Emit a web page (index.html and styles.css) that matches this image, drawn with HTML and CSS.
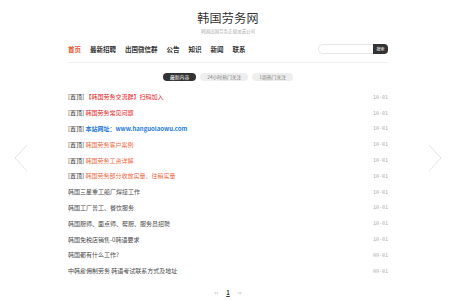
FILE: index.html
```html
<!DOCTYPE html>
<html lang="zh">
<head>
<meta charset="utf-8">
<link rel="stylesheet" href="styles.css">
</head>
<body>
<div class="page">
  <header class="header">
    <h1 class="logo">韩国劳务网</h1>
    <p class="slogan">韩国出国劳务正规派遣公司</p>
  </header>
  <div class="navbar">
    <nav class="nav">
      <a class="active">首页</a>
      <a>最新招聘</a>
      <a>出国微信群</a>
      <a>公告</a>
      <a>知识</a>
      <a>新闻</a>
      <a>联系</a>
    </nav>
    <form class="search">
      <input class="search-input" type="text">
      <button class="search-btn" type="button">搜索</button>
    </form>
  </div>
  <div class="tabs">
    <span class="tab on">最新内容</span>
    <span class="tab">24小时热门关注</span>
    <span class="tab">1周热门关注</span>
  </div>
  <ul class="list">
    <li><span class="t"><span class="top">[置顶]</span> <span class="red">【韩国劳务交流群】扫码加入</span></span><span class="d">10-01</span></li>
    <li><span class="t"><span class="top">[置顶]</span> <span class="red">韩国劳务常见问题</span></span><span class="d">10-01</span></li>
    <li><span class="t"><span class="top">[置顶]</span> <span class="blue">本站网址：www.hanguolaowu.com</span></span><span class="d">10-01</span></li>
    <li><span class="t"><span class="top">[置顶]</span> <span class="orange">韩国劳务客户案例</span></span><span class="d">10-01</span></li>
    <li><span class="t"><span class="top">[置顶]</span> <span class="orange">韩国劳务工资详解</span></span><span class="d">10-01</span></li>
    <li><span class="t"><span class="top">[置顶]</span> <span class="orange">韩国劳务部分收放实量、往稿实量</span></span><span class="d">10-01</span></li>
    <li><span class="t">韩国三星重工船厂焊接工作</span><span class="d">10-01</span></li>
    <li><span class="t">韩国工厂普工、餐饮服务</span><span class="d">10-01</span></li>
    <li><span class="t">韩国厨师、面点师、帮厨、服务员招聘</span><span class="d">10-01</span></li>
    <li><span class="t">韩国免税店销售-0韩语要求</span><span class="d">10-01</span></li>
    <li><span class="t">韩国都有什么工作?</span><span class="d">09-01</span></li>
    <li><span class="t">中韩雇佣制劳务 韩语考试联系方式及地址</span><span class="d">09-01</span></li>
  </ul>
  <div class="pager"><span>‹‹</span><span class="cur">1</span><span>››</span></div>
</div>
<a class="arrow prev"><svg width="14" height="28" viewBox="0 0 14 28"><path d="M13 1 L1 14 L13 27" fill="none" stroke="#e3e3e3" stroke-width="1"/></svg></a>
<a class="arrow next"><svg width="14" height="28" viewBox="0 0 14 28"><path d="M1 1 L13 14 L1 27" fill="none" stroke="#e3e3e3" stroke-width="1"/></svg></a>
</body>
</html>
```
FILE: styles.css
```css
* { box-sizing: border-box; }
html, body { margin: 0; padding: 0; background: #fff; }
body {
  font-family: "Noto Sans CJK SC", "Liberation Sans", sans-serif;
  color: #444;
  width: 456px;
  height: 300px;
  overflow: hidden;
  position: relative;
}
.page { width: 320px; margin: 0 auto; }
.header { text-align: center; padding-top: 10px; }
.logo {
  margin: 0;
  font-size: 12px;
  line-height: 16px;
  font-weight: normal;
  color: #333;
  letter-spacing: 0.3px;
}
.slogan {
  margin: 2px 0 0;
  font-size: 4.5px;
  line-height: 6px;
  color: #aaa;
}
.navbar {
  margin-top: 8px;
  display: flex;
  justify-content: space-between;
  align-items: flex-start;
  height: 21px;
  padding-top: 1px;
  border-bottom: 1px solid #f0f0f0;
}
.nav { display: flex; gap: 9px; padding-top: 2px; }
.nav a {
  font-size: 6.5px;
  line-height: 9px;
  font-weight: bold;
  color: #333;
}
.nav a.active { color: #e8542e; }
.search { display: flex; align-items: center; margin: 0; padding-top: 1px; }
.search-input {
  width: 55px;
  height: 10px;
  border: 1px solid #e6e6e6;
  border-right: 0;
  border-radius: 5px 0 0 5px;
  padding: 0;
  margin: 0;
  background: #fff;
}
.search-btn {
  width: 15px;
  height: 10px;
  border: 0;
  margin: 0;
  padding: 0;
  background: #333;
  color: #fff;
  font-family: inherit;
  font-size: 4px;
  line-height: 10px;
  border-radius: 0 4px 4px 0;
}
.tabs {
  display: flex;
  justify-content: center;
  gap: 4px;
  margin-top: 10px;
}
.tab {
  font-size: 4.8px;
  line-height: 8px;
  height: 8px;
  padding: 0 7px;
  border-radius: 4px;
  background: #eee;
  color: #777;
}
.tab.on { background: #333; color: #fff; }
.list {
  list-style: none;
  margin: 8px 0 0;
  padding: 0;
}
.list li {
  display: flex;
  justify-content: space-between;
  align-items: center;
  height: 15.8px;
  font-size: 6px;
}
.list .t { color: #4a4a4a; }
.top { color: #333; }
.red { color: #e41a1a; }
.blue { color: #1d7bd8; font-weight: bold; }
.orange { color: #ea6a3f; }
.d {
  font-family: "DejaVu Sans Mono", monospace;
  font-size: 5px;
  color: #aaa;
}
.pager {
  display: flex;
  justify-content: center;
  gap: 8px;
  margin-top: 9px;
  font-size: 6px;
  color: #999;
}
.pager .cur { color: #333; text-decoration: underline; font-weight: bold; }
.arrow { position: absolute; top: 144px; }
.arrow.prev { left: 14px; }
.arrow.next { left: 428px; }
```
